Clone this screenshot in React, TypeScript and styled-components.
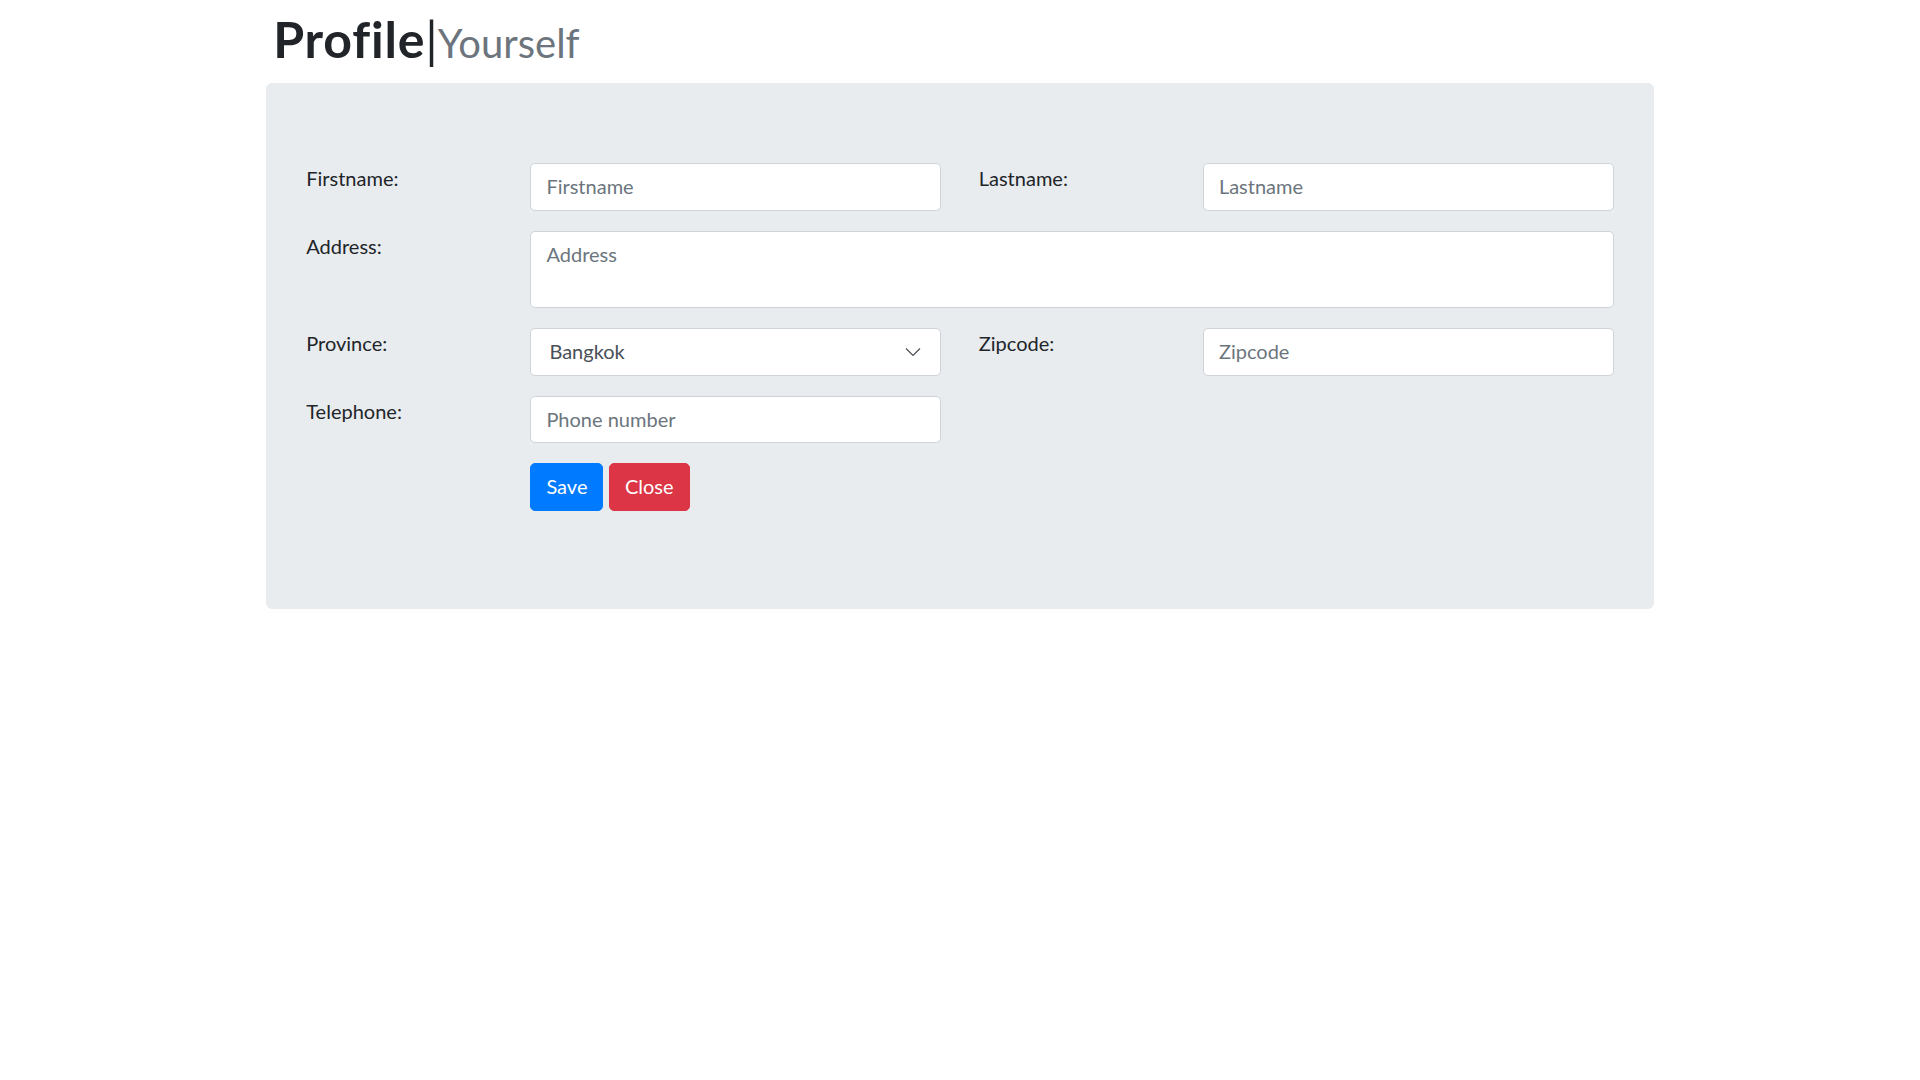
import styled, { createGlobalStyle } from 'styled-components';

const GlobalStyle = createGlobalStyle`
  *, *::before, *::after {
    box-sizing: border-box;
  }
  body {
    margin: 0;
    background: #fff;
    color: #212529;
    font-family: 'Segoe UI', Lato, 'Open Sans', sans-serif;
    font-size: 20px;
    line-height: 1.5;
  }
`;

const Container = styled.div`
  max-width: 1425px;
  margin: 0 auto;
  padding: 9px 18.75px 0;
`;

const Title = styled.h1`
  margin: 0 0 14px;
  padding-left: 7px;
  font-size: 50px;
  font-weight: 400;
  line-height: 1.2;
  color: #212529;
  font-variant-ligatures: none;

  b {
    font-weight: 700;
    letter-spacing: 0.8px;
  }
`;

const Muted = styled.small`
  font-size: 80%;
  font-weight: 400;
  color: #6c757d;
`;

const Jumbotron = styled.div`
  background: #e9ecef;
  border-radius: 6px;
  padding: 80px 40px;
`;

const FormGrid = styled.form`
  display: grid;
  grid-template-columns: repeat(6, 1fr);
  column-gap: 37.5px;
  row-gap: 20px;
`;

const Label = styled.label`
  grid-column: span 1;
  line-height: 30px;
  color: #212529;
`;

const Field = styled.div<{ $span?: number }>`
  grid-column: span ${(p) => p.$span ?? 2};
  position: relative;
`;

const inputBase = `
  display: block;
  width: 100%;
  height: 47.5px;
  padding: 7px 15px 8px;
  font-family: inherit;
  font-size: 20px;
  line-height: 30px;
  color: #495057;
  background: #fff;
  border: 1.25px solid #ced4da;
  border-radius: 5px;
  outline: none;

  &::placeholder {
    color: #6c757d;
    opacity: 1;
  }
`;

const Input = styled.input`
  ${inputBase}
`;

const TextArea = styled.textarea`
  ${inputBase}
  height: 77.5px;
  resize: none;
`;

const Select = styled.select`
  ${inputBase}
  padding-left: 18px;
  appearance: none;
  -webkit-appearance: none;
`;

const Chevron = styled.svg`
  position: absolute;
  right: 20px;
  top: 50%;
  transform: translateY(-50%);
  pointer-events: none;
`;

const Actions = styled.div`
  grid-column: 2 / span 5;
  display: flex;
  gap: 5.5px;
  margin-bottom: 18px;
`;

const Button = styled.button<{ $variant: 'primary' | 'danger' }>`
  height: 47.5px;
  padding: 7px 15px 8px;
  font-family: inherit;
  font-size: 20px;
  line-height: 30px;
  color: #fff;
  border: 1.25px solid ${(p) => (p.$variant === 'primary' ? '#007bff' : '#dc3545')};
  background: ${(p) => (p.$variant === 'primary' ? '#007bff' : '#dc3545')};
  border-radius: 5px;
  cursor: pointer;
`;

export default function App() {
  return (
    <>
      <GlobalStyle />
      <Container>
        <Title>
          <b>Profile</b>|<Muted>Yourself</Muted>
        </Title>
        <Jumbotron>
          <FormGrid onSubmit={(e) => e.preventDefault()}>
            <Label>Firstname:</Label>
            <Field>
              <Input placeholder="Firstname" />
            </Field>
            <Label>Lastname:</Label>
            <Field>
              <Input placeholder="Lastname" />
            </Field>

            <Label>Address:</Label>
            <Field $span={5}>
              <TextArea placeholder="Address" />
            </Field>

            <Label>Province:</Label>
            <Field>
              <Select defaultValue="Bangkok">
                <option>Bangkok</option>
                <option>Chiang Mai</option>
                <option>Phuket</option>
              </Select>
              <Chevron width="16" height="9" viewBox="0 0 16 9" fill="none">
                <path d="M1 1l7 7 7-7" stroke="#495057" strokeWidth="1.2" />
              </Chevron>
            </Field>
            <Label>Zipcode:</Label>
            <Field>
              <Input placeholder="Zipcode" />
            </Field>

            <Label>Telephone:</Label>
            <Field>
              <Input placeholder="Phone number" />
            </Field>

            <Actions>
              <Button type="button" $variant="primary">Save</Button>
              <Button type="button" $variant="danger">Close</Button>
            </Actions>
          </FormGrid>
        </Jumbotron>
      </Container>
    </>
  );
}
